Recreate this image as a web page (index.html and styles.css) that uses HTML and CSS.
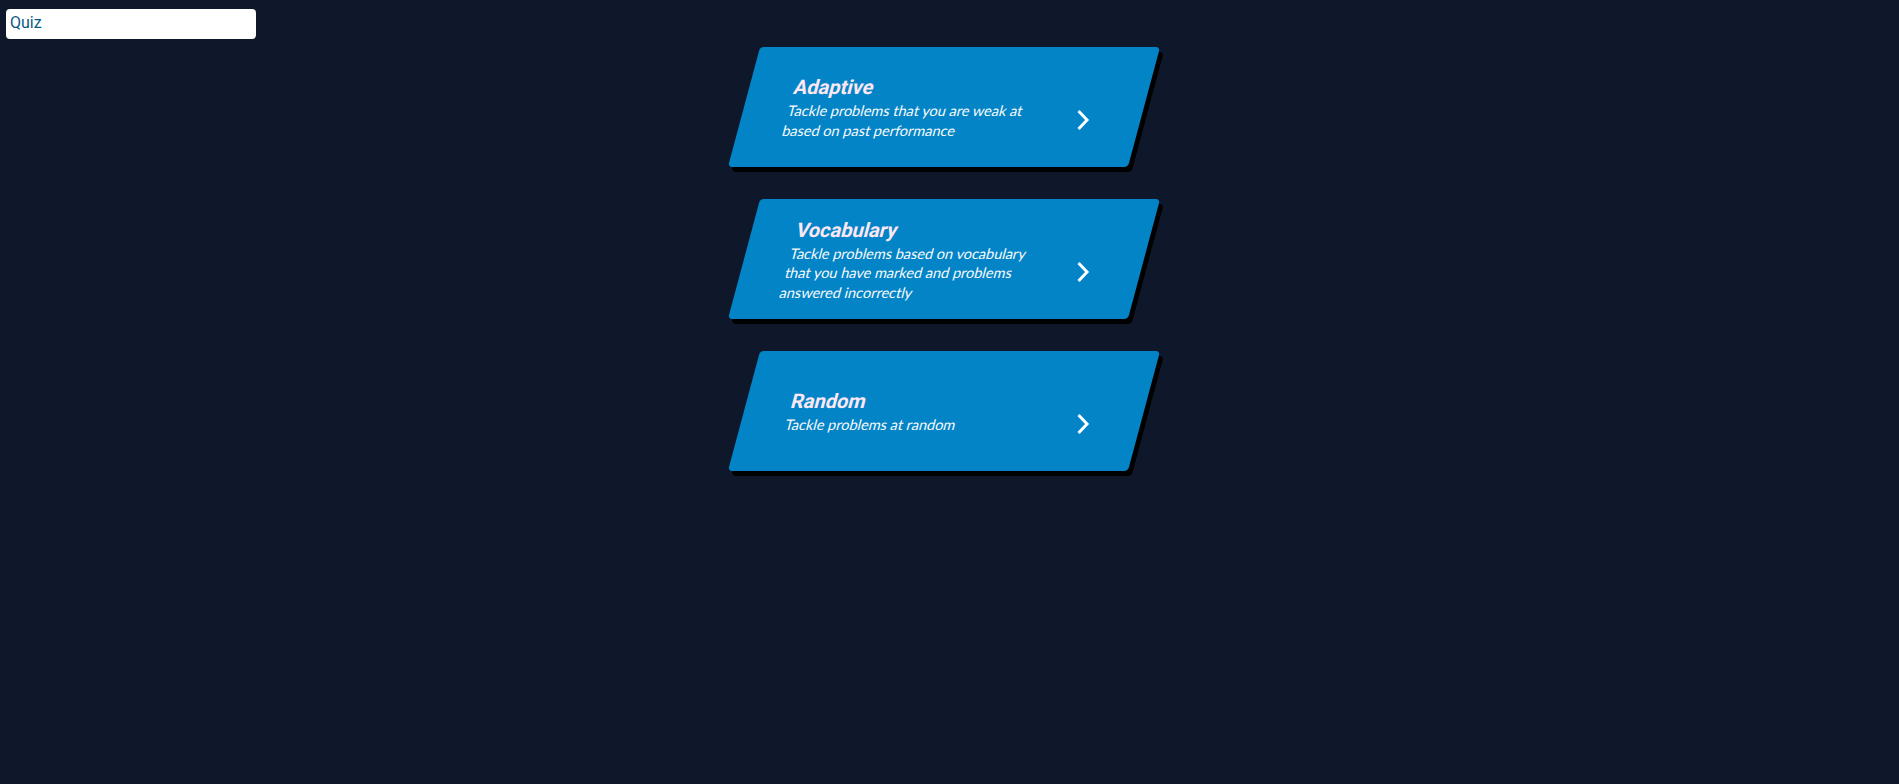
FILE: index.html
```html
<!DOCTYPE html>
<html lang="en">
<head>
<meta charset="utf-8">
<title>Quiz</title>
<link rel="stylesheet" href="styles.css">
</head>
<body>
  <header class="topbar">
    <div class="quiz-box">Quiz</div>
  </header>
  <main class="modes">
    <a class="mode-card" href="#">
      <div class="mode-text">
        <h2 class="mode-title">Adaptive</h2>
        <p class="mode-desc">Tackle problems that you are weak at based on past performance</p>
      </div>
      <svg class="chevron" width="14" height="22" viewBox="0 0 14 22"><path d="M3 2 L11.5 11 L3 20" fill="none" stroke="#fff" stroke-width="3"/></svg>
    </a>
    <a class="mode-card" href="#">
      <div class="mode-text">
        <h2 class="mode-title">Vocabulary</h2>
        <p class="mode-desc">Tackle problems based on vocabulary that you have marked and problems answered incorrectly</p>
      </div>
      <svg class="chevron" width="14" height="22" viewBox="0 0 14 22"><path d="M3 2 L11.5 11 L3 20" fill="none" stroke="#fff" stroke-width="3"/></svg>
    </a>
    <a class="mode-card" href="#">
      <div class="mode-text">
        <h2 class="mode-title">Random</h2>
        <p class="mode-desc">Tackle problems at random</p>
      </div>
      <svg class="chevron" width="14" height="22" viewBox="0 0 14 22"><path d="M3 2 L11.5 11 L3 20" fill="none" stroke="#fff" stroke-width="3"/></svg>
    </a>
  </main>
</body>
</html>
```

FILE: styles.css
```css
html, body {
  margin: 0;
  padding: 0;
}
body {
  background: #0f172a;
  min-height: 784px;
  font-family: Roboto, "Liberation Sans", sans-serif;
}
.topbar {
  padding: 9px 0 0 6px;
}
.quiz-box {
  width: 250px;
  height: 30px;
  box-sizing: border-box;
  padding: 4px 0 0 4px;
  background: #ffffff;
  border-radius: 4px;
  color: #075985;
  font-size: 16px;
  line-height: 20px;
}
.modes {
  display: flex;
  flex-direction: column;
  align-items: center;
  gap: 32px;
  padding: 8px 11px 0 0;
}
.mode-card {
  display: flex;
  align-items: center;
  width: 400px;
  height: 120px;
  box-sizing: border-box;
  padding: 0 51px 0 45px;
  background: #0284c7;
  border-radius: 4px;
  box-shadow: 5px 5px 0 #000;
  transform: skewX(-15deg);
  text-decoration: none;
}
.mode-text {
  flex: 1;
}
.mode-title {
  margin: 0;
  font-family: Roboto, sans-serif;
  font-weight: 700;
  font-size: 20px;
  line-height: 28px;
  color: #fce7f3;
}
.mode-desc {
  margin: 0;
  max-width: 252px;
  font-family: Lato, "Open Sans", sans-serif;
  font-size: 14.5px;
  line-height: 19.6px;
  color: #f8fafc;
}
.chevron {
  display: block;
  margin-top: 26px;
  transform: skewX(15deg);
}
```
